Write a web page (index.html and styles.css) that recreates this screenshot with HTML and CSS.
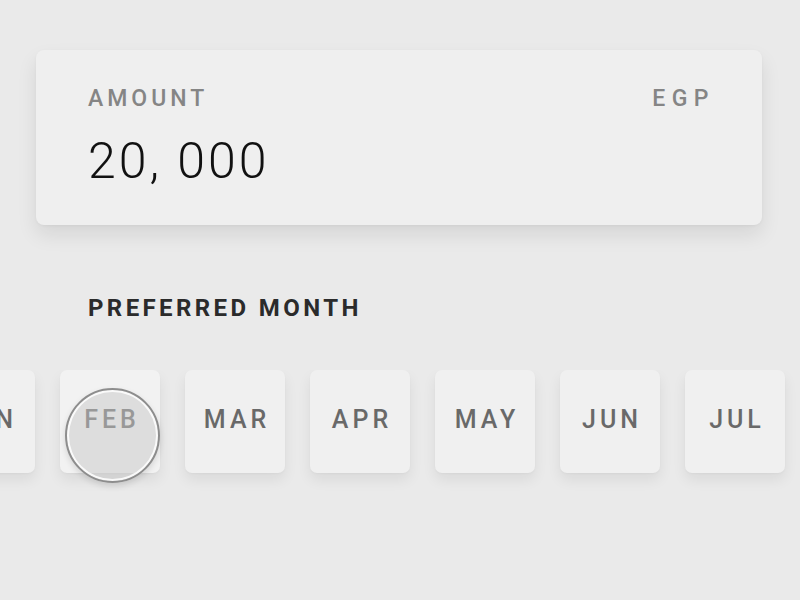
FILE: index.html
```html
<!DOCTYPE html>
<html lang="en">
<head>
<meta charset="utf-8">
<title>Amount</title>
<link rel="stylesheet" href="styles.css">
</head>
<body>
<div class="page">
  <section class="card">
    <div class="card-head">
      <span class="label">AMOUNT</span>
      <span class="label label-wide">EGP</span>
    </div>
    <div class="amount">20, 000</div>
  </section>

  <h2 class="section-title">PREFERRED MONTH</h2>

  <div class="months-wrap">
    <div class="months">
      <div class="month">JAN</div>
      <div class="month month-active">FEB<span class="touch"></span></div>
      <div class="month">MAR</div>
      <div class="month">APR</div>
      <div class="month">MAY</div>
      <div class="month">JUN</div>
      <div class="month">JUL</div>
    </div>
  </div>
</div>
</body>
</html>
```

FILE: styles.css
```css
html, body {
  margin: 0;
  padding: 0;
}

body {
  width: 800px;
  height: 600px;
  overflow: hidden;
  background: #eaeaea;
  font-family: Roboto, "Liberation Sans", sans-serif;
}

.page {
  padding-top: 50px;
}

.card {
  margin-left: 36px;
  width: 726px;
  height: 175px;
  box-sizing: border-box;
  padding: 36px 47px 0 52px;
  background: #efefef;
  border-radius: 8px;
  box-shadow: 0 10px 20px rgba(0, 0, 0, 0.09), 0 1px 3px rgba(0, 0, 0, 0.04);
}

.card-head {
  display: flex;
  justify-content: space-between;
}

.label {
  font-size: 23px;
  line-height: 26px;
  font-weight: 500;
  letter-spacing: 4px;
  color: #858585;
}

.label-wide {
  letter-spacing: 6.5px;
}

.amount {
  margin-top: 21px;
  font-size: 50px;
  line-height: 56px;
  font-weight: 300;
  letter-spacing: 3px;
  color: #111111;
}

.section-title {
  margin: 69px 0 0 88px;
  font-size: 24px;
  line-height: 28px;
  font-weight: 700;
  letter-spacing: 3.4px;
  color: #2b2b2b;
}

.months-wrap {
  margin-top: 48px;
  width: 800px;
  overflow: hidden;
  padding-bottom: 30px;
}

.months {
  display: flex;
  gap: 25px;
  margin-left: -65px;
}

.month {
  position: relative;
  flex: 0 0 100px;
  height: 103px;
  box-sizing: border-box;
  display: flex;
  align-items: center;
  justify-content: center;
  padding: 0 0 5px 4px;
  background: #f0f0f0;
  border-radius: 7px;
  box-shadow: 0 7px 14px rgba(0, 0, 0, 0.07), 0 1px 2px rgba(0, 0, 0, 0.03);
  font-size: 25px;
  font-weight: 500;
  letter-spacing: 4px;
  color: #696969;
}

.month-active {
  background: #f2f2f2;
}

.touch {
  position: absolute;
  left: 5px;
  top: 18px;
  width: 95px;
  height: 95px;
  box-sizing: border-box;
  border-radius: 50%;
  border: 2px solid #8d8d8d;
  background: rgba(199, 199, 199, 0.5);
  box-shadow: inset 0 0 0 2px rgba(255, 255, 255, 0.85), 0 3px 6px rgba(0, 0, 0, 0.12);
}
```
